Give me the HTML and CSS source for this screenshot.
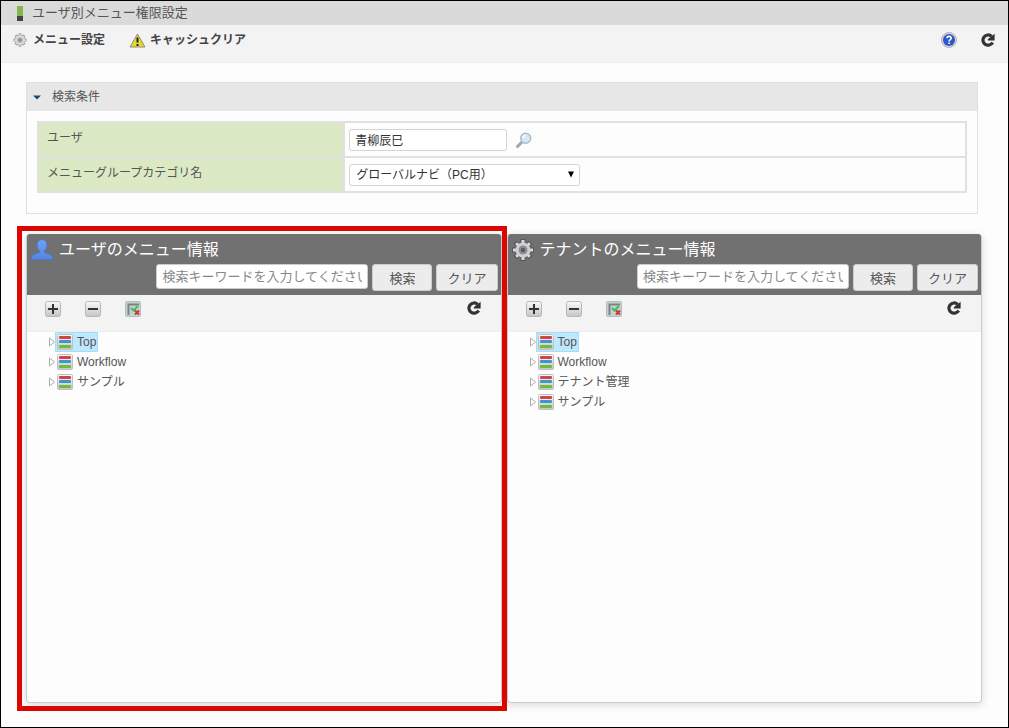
FILE: index.html
```html
<!DOCTYPE html>
<html lang="ja">
<head>
    <meta charset="UTF-8">
    <meta name="viewport" content="width=device-width, initial-scale=1.0">
    <title>ユーザ別メニュー権限設定</title>
    <link rel="stylesheet" href="styles.css">
</head>
<body>
    <svg class="defs" aria-hidden="true">
        <defs>
            <linearGradient id="silver" x1="0" y1="0" x2="0" y2="1">
                <stop offset="0" stop-color="#fafafa"/>
                <stop offset="1" stop-color="#c4c4c4"/>
            </linearGradient>
            <linearGradient id="blue" x1="0" y1="0" x2="0" y2="1">
                <stop offset="0" stop-color="#6f9ff5"/>
                <stop offset="1" stop-color="#5585e0"/>
            </linearGradient>
            <symbol id="refresh" viewBox="0 0 14 14">
                <path d="M11.6 9.4A5.1 5.1 0 1 1 10.6 3.4" fill="none" stroke="#333" stroke-width="3.2"/>
                <path d="M13.6 0.8V7.6H6.8V6.2z" fill="#333"/>
            </symbol>
            <symbol id="gear" viewBox="0 0 24 24">
                <g stroke-width="5" stroke="#555">
                    <path d="M12 1V23M1 12H23M4.4 4.4L19.6 19.6M19.6 4.4L4.4 19.6"/>
                </g>
                <g stroke-width="3" stroke="#dcdcdc">
                    <path d="M12 2V22M2 12H22M5.2 5.2L18.8 18.8M18.8 5.2L5.2 18.8"/>
                </g>
                <circle cx="12" cy="12" r="7.5" fill="#d0d0d4"/>
                <circle cx="12" cy="12" r="4.5" fill="#8c8c92"/>
                <circle cx="12" cy="12" r="2.2" fill="#5c5c5c"/>
            </symbol>
            <symbol id="plus" viewBox="0 0 16 16">
                <rect x="0.5" y="0.5" width="15" height="15" rx="2" fill="url(#silver)" stroke="#b8b8b8"/>
                <path d="M3 8H13M8 3V13" stroke="#333" stroke-width="2"/>
            </symbol>
            <symbol id="minus" viewBox="0 0 16 16">
                <rect x="0.5" y="0.5" width="15" height="15" rx="2" fill="url(#silver)" stroke="#b8b8b8"/>
                <path d="M3 8H13" stroke="#333" stroke-width="2"/>
            </symbol>
            <symbol id="check" viewBox="0 0 16 16">
                <rect x="0.5" y="0.5" width="15" height="15" rx="1" fill="#c6d2d0" stroke="#b4bfbd"/>
                <path d="M3.5 14V3.5H14" fill="none" stroke="#7d8584" stroke-width="2"/>
                <path d="M6 7L8.5 9.5L13 5" fill="none" stroke="#3cbf5a" stroke-width="2"/>
                <path d="M10 9.5L14 13.5M14 9.5L10 13.5" stroke="#d03434" stroke-width="2"/>
            </symbol>
            <symbol id="menu" viewBox="0 0 16 16">
                <rect x="0.5" y="0.5" width="15" height="15" rx="1" fill="url(#silver)" stroke="#c0c0c0"/>
                <rect x="2" y="2" width="12" height="3" rx="1" fill="#d2444a"/>
                <rect x="2" y="6" width="12" height="3" rx="1" fill="#3a97d0"/>
                <rect x="2" y="11" width="12" height="3" rx="1" fill="#70bb38"/>
            </symbol>
            <symbol id="arrow" viewBox="0 0 6 10">
                <path d="M0.5 1L5.5 5L0.5 9z" fill="#fff" stroke="#aaa"/>
            </symbol>
        </defs>
    </svg>

    <header class="title">
        <span class="mark"></span>
        <h1>ユーザ別メニュー権限設定</h1>
    </header>

    <nav class="toolbar">
        <a href="#" class="tool">
            <svg class="gear-small"><use href="#gear"/></svg>
            メニュー設定
        </a>
        <a href="#" class="tool warn">
            <svg class="warning" viewBox="0 0 17 15">
                <path d="M8.5 1L16 14H1z" fill="#e8d82c" stroke="#8d8d80" stroke-linejoin="round"/>
                <path d="M8.5 4.5V9.5M8.5 11V13" stroke="#222" stroke-width="2"/>
            </svg>
            キャッシュクリア
        </a>
        <div class="tool-right">
            <button class="icon" aria-label="ヘルプ">
                <svg class="help" viewBox="0 0 16 16">
                    <circle cx="8" cy="8" r="7.5" fill="#d2d2d2" stroke="#b5b5b5"/>
                    <circle cx="8" cy="8" r="6" fill="#2c58cf"/>
                    <path d="M6 6.3C6 3.8 10.2 3.8 10.2 6.2C10.2 7.6 8.1 7.6 8.1 9.4M8.1 10.5V12" fill="none" stroke="#fff" stroke-width="1.6"/>
                </svg>
            </button>
            <button class="icon" aria-label="再読み込み"><svg class="refresh"><use href="#refresh"/></svg></button>
        </div>
    </nav>

    <main>
        <section class="search">
            <h2>
                <svg class="toggle" viewBox="0 0 8 5"><path d="M0 0.5H8L4 4.5z" fill="#114c80"/></svg>
                検索条件
            </h2>
            <div class="search-body">
                <table>
                    <tr>
                        <th scope="row"><label for="user">ユーザ</label></th>
                        <td>
                            <div class="field">
                                <input type="text" id="user" class="user" value="青柳辰巳">
                                <button class="icon" aria-label="ユーザ検索">
                                    <svg class="lens" viewBox="0 0 16 16">
                                        <path d="M1.5 14.5L6 10" stroke="#a5a5a5" stroke-width="3" stroke-linecap="round"/>
                                        <circle cx="9.7" cy="6.2" r="5" fill="#d3e9f8" stroke="#b3bbc2" stroke-width="1.5"/>
                                        <path d="M7 6C7 4.5 8 3.5 9.5 3.5" fill="none" stroke="#fff" stroke-width="1.5"/>
                                    </svg>
                                </button>
                            </div>
                        </td>
                    </tr>
                    <tr>
                        <th scope="row"><label for="category">メニューグループカテゴリ名</label></th>
                        <td>
                            <div class="select">
                                <select id="category">
                                    <option>グローバルナビ（PC用）</option>
                                </select>
                                <svg class="caret" viewBox="0 0 6 7"><path d="M0 0.5H6L3 6.5z" fill="#000"/></svg>
                            </div>
                        </td>
                    </tr>
                </table>
            </div>
        </section>

        <div class="panels">
            <section class="panel selected">
                <div class="panel-head">
                    <h2>
                        <svg class="panel-icon" viewBox="0 0 24 24">
                            <path d="M12 1.5C8.8 1.5 7 3.8 7 7C7 9.6 8.2 11.8 9.6 13V14.5C7.5 15.8 1.5 16.2 1.5 19.5V21.5H22.5V19.5C22.5 16.2 16.5 15.8 14.4 14.5V13C15.8 11.8 17 9.6 17 7C17 3.8 15.2 1.5 12 1.5z" fill="url(#blue)" stroke="#4a77cd"/>
                        </svg>
                        ユーザのメニュー情報
                    </h2>
                    <div class="panel-search">
                        <input type="text" class="keyword" placeholder="検索キーワードを入力してください" aria-label="ユーザのメニュー検索">
                        <button class="btn">検索</button>
                        <button class="btn">クリア</button>
                    </div>
                </div>
                <div class="panel-tools">
                    <button class="icon" aria-label="すべて開く"><svg class="small"><use href="#plus"/></svg></button>
                    <button class="icon" aria-label="すべて閉じる"><svg class="small"><use href="#minus"/></svg></button>
                    <button class="icon" aria-label="選択解除"><svg class="small"><use href="#check"/></svg></button>
                    <button class="icon last" aria-label="再読み込み"><svg class="refresh"><use href="#refresh"/></svg></button>
                </div>
                <ul class="tree">
                    <li><svg class="arrow"><use href="#arrow"/></svg><a href="#" class="node active"><svg class="small"><use href="#menu"/></svg>Top</a></li>
                    <li><svg class="arrow"><use href="#arrow"/></svg><a href="#" class="node"><svg class="small"><use href="#menu"/></svg>Workflow</a></li>
                    <li><svg class="arrow"><use href="#arrow"/></svg><a href="#" class="node"><svg class="small"><use href="#menu"/></svg>サンプル</a></li>
                </ul>
            </section>

            <section class="panel">
                <div class="panel-head">
                    <h2>
                        <svg class="panel-icon"><use href="#gear"/></svg>
                        テナントのメニュー情報
                    </h2>
                    <div class="panel-search">
                        <input type="text" class="keyword" placeholder="検索キーワードを入力してください" aria-label="テナントのメニュー検索">
                        <button class="btn">検索</button>
                        <button class="btn">クリア</button>
                    </div>
                </div>
                <div class="panel-tools">
                    <button class="icon" aria-label="すべて開く"><svg class="small"><use href="#plus"/></svg></button>
                    <button class="icon" aria-label="すべて閉じる"><svg class="small"><use href="#minus"/></svg></button>
                    <button class="icon" aria-label="選択解除"><svg class="small"><use href="#check"/></svg></button>
                    <button class="icon last" aria-label="再読み込み"><svg class="refresh"><use href="#refresh"/></svg></button>
                </div>
                <ul class="tree">
                    <li><svg class="arrow"><use href="#arrow"/></svg><a href="#" class="node active"><svg class="small"><use href="#menu"/></svg>Top</a></li>
                    <li><svg class="arrow"><use href="#arrow"/></svg><a href="#" class="node"><svg class="small"><use href="#menu"/></svg>Workflow</a></li>
                    <li><svg class="arrow"><use href="#arrow"/></svg><a href="#" class="node"><svg class="small"><use href="#menu"/></svg>テナント管理</a></li>
                    <li><svg class="arrow"><use href="#arrow"/></svg><a href="#" class="node"><svg class="small"><use href="#menu"/></svg>サンプル</a></li>
                </ul>
            </section>
        </div>
    </main>
</body>
</html>
```
FILE: styles.css
```css
* {
    box-sizing: border-box;
}
body {
    display: flex;
    flex-direction: column;
    min-height: 100vh;
    margin: 0;
    border: 1px solid #000;
    background: #fdfdfd;
    color: #555;
    font-family: "Liberation Sans", "Noto Sans CJK JP", sans-serif;
    font-size: 12px;
    line-height: 20px;
}
h1, h2 {
    margin: 0;
    font-weight: normal;
}
input, select, button {
    margin: 0;
    font-family: inherit;
    font-size: inherit;
    color: inherit;
}
a {
    color: inherit;
    text-decoration: none;
}
svg {
    display: block;
    flex: none;
}
.defs {
    position: absolute;
    width: 0;
    height: 0;
}
.icon {
    padding: 0;
    border: 0;
    background: none;
    cursor: pointer;
}
.small {
    width: 16px;
    height: 16px;
}
.refresh {
    width: 14px;
    height: 14px;
}

/* title bar */
.title {
    display: flex;
    align-items: center;
    gap: 9px;
    height: 24px;
    padding-left: 16px;
    background: #dadada;
}
.title h1 {
    font-size: 13px;
}
.mark {
    width: 6px;
    height: 15px;
    background: linear-gradient(#84b64e 68%, #444 68%);
}
.toolbar {
    display: flex;
    align-items: flex-start;
    height: 38px;
    padding: 5px 13px 0 12px;
    background: #f3f3f3;
    border-bottom: 1px solid #eee;
}
.tool {
    display: flex;
    align-items: center;
    gap: 6px;
    margin-right: 24px;
    font-weight: bold;
    color: #444;
}
.tool.warn {
    gap: 4px;
}
.gear-small {
    width: 14px;
    height: 14px;
    opacity: 0.7;
}
.warning {
    width: 17px;
    height: 15px;
}
.help {
    width: 16px;
    height: 16px;
}
.tool-right {
    display: flex;
    align-items: center;
    gap: 24px;
    height: 20px;
    margin-left: auto;
}

main {
    display: flex;
    flex-direction: column;
    flex: 1;
    padding: 19px 26px 24px 25px;
}

/* search conditions */
.search {
    margin-right: 4px;
    border: 1px solid #e0e0e0;
}
.search h2 {
    display: flex;
    align-items: center;
    gap: 11px;
    height: 28px;
    padding-left: 6px;
    background: #e7e7e7;
    font-size: 12px;
}
.toggle {
    width: 8px;
    height: 5px;
}
.search-body {
    padding: 10px 10px 20px;
}
table {
    width: 100%;
    border-collapse: collapse;
}
th, td {
    height: 35px;
    border: 2px solid #e0e0e0;
}
th {
    width: 33%;
    padding: 5px 8px;
    background: #dce9c5;
    font-weight: normal;
    text-align: left;
    vertical-align: top;
}
td {
    padding: 0 4px;
}
.field {
    display: flex;
    align-items: center;
    gap: 9px;
}
.user, select {
    height: 22px;
    border: 1px solid #d4d4d4;
    border-radius: 3px;
    background: #fff;
    color: #333;
}
.user {
    width: 158px;
    padding: 0 5px;
}
.lens {
    width: 16px;
    height: 16px;
}
.select {
    position: relative;
    width: 231px;
}
select {
    display: block;
    width: 100%;
    padding: 0 6px;
    appearance: none;
}
.caret {
    position: absolute;
    top: 7px;
    right: 6px;
    width: 6px;
    height: 7px;
    pointer-events: none;
}

/* menu panels */
.panels {
    display: flex;
    flex: 1;
    gap: 5px;
    margin-top: 20px;
}
.panel {
    position: relative;
    flex: 1;
    min-width: 0;
    border: 1px solid #ccc;
    border-top: 0;
    border-radius: 4px;
    box-shadow: 0 2px 8px rgba(0, 0, 0, 0.15);
}
.panel.selected::after {
    content: "";
    position: absolute;
    top: -8px;
    right: -6px;
    bottom: -9px;
    left: -10px;
    z-index: 1;
    border: 5px solid #dc0500;
    pointer-events: none;
}
.panel-head {
    padding: 2px 3px 4px;
    background: #717171;
    border-radius: 3px 3px 0 0;
}
.panel-head h2 {
    display: flex;
    align-items: center;
    gap: 5px;
    height: 28px;
    color: #fff;
    font-size: 16px;
}
.panel-icon {
    width: 24px;
    height: 24px;
}
.panel-search {
    display: flex;
    justify-content: flex-end;
    gap: 4px;
    font-size: 13px;
}
.keyword {
    width: 212px;
    height: 25px;
    padding: 0 5px;
    border: 1px solid #ccc;
    border-radius: 3px;
    background: #fff;
}
.keyword::placeholder {
    color: #888;
}
.btn {
    height: 27px;
    padding: 0 16px;
    border: 1px solid #ccc;
    border-radius: 3px;
    background: #ececec;
    cursor: pointer;
}
.btn:last-child {
    padding: 0 10px;
}
.panel-tools {
    display: flex;
    align-items: flex-start;
    gap: 24px;
    height: 37px;
    padding: 6px 20px 0 18px;
    background: #f3f3f3;
    border-bottom: 1px solid #eee;
}
.last {
    margin-left: auto;
}
.tree {
    margin: 0;
    padding: 0 0 0 22px;
    list-style: none;
}
.tree li {
    display: flex;
    align-items: center;
    height: 20px;
}
.arrow {
    width: 6px;
    height: 10px;
}
.node {
    display: flex;
    align-items: center;
    gap: 4px;
    height: 20px;
    padding: 0 2px;
}
.node.active {
    background: #bee8fd;
    outline: 1px solid #a5dcf8;
    outline-offset: -1px;
}
```
